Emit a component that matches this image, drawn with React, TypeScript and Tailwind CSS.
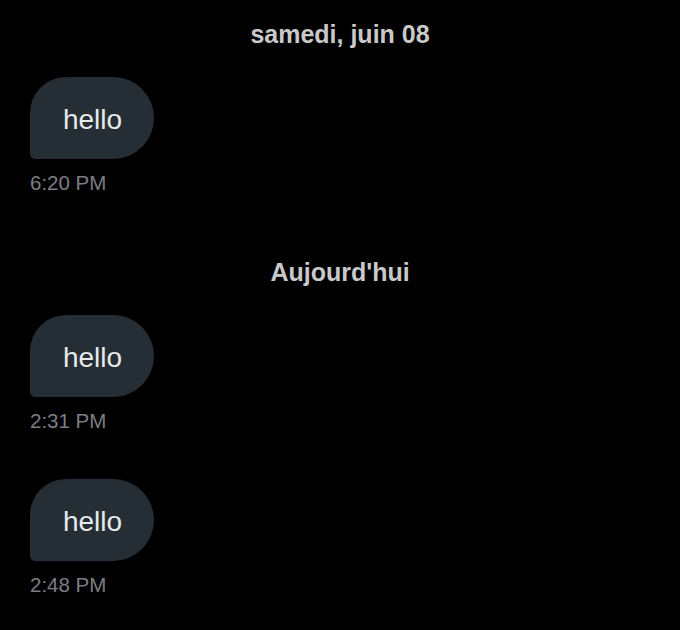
const groups = [
  { day: 'samedi, juin 08', messages: [{ text: 'hello', time: '6:20 PM' }] },
  {
    day: "Aujourd'hui",
    messages: [
      { text: 'hello', time: '2:31 PM' },
      { text: 'hello', time: '2:48 PM' },
    ],
  },
];

function Bubble({ text, time }: { text: string; time: string }) {
  return (
    <div className="flex flex-col items-start">
      <div className="w-[124px] h-[82px] flex items-center justify-center bg-[#262e35] rounded-tl-[36px] rounded-tr-[41px] rounded-br-[41px] rounded-bl-[5px]">
        <span className="text-[28px] leading-none text-[#e7e9ea] pt-[3px] pl-[1px]">{text}</span>
      </div>
      <span className="mt-3 text-[20.5px] leading-[24px] text-[#7a7e83]">{time}</span>
    </div>
  );
}

export default function App() {
  return (
    <div className="w-[680px] h-[630px] bg-black overflow-hidden px-[30px] pt-[19px]" style={{ fontFamily: '"Liberation Sans", Arial, sans-serif' }}>
      {groups.map((g, gi) => (
        <div key={g.day} className={gi > 0 ? 'mt-[62px]' : ''}>
          <h2 className="text-center text-[25px] leading-[30px] font-bold text-[#c9c9c9]">{g.day}</h2>
          <div className="mt-[28px] flex flex-col gap-[46px]">
            {g.messages.map((m) => (
              <Bubble key={m.time} text={m.text} time={m.time} />
            ))}
          </div>
        </div>
      ))}
    </div>
  );
}
